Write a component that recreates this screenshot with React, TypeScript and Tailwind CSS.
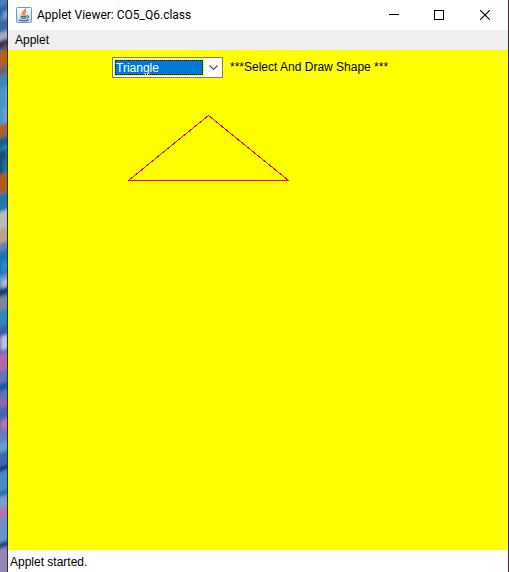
import { useState } from "react";

const shapes = ["Triangle", "Line", "Rectangle", "Oval", "Circle"];

const wallpaper: [number, number, number, number, string][] = [
  [0, 0, 7, 14, "#4a7fc0"],
  [0, 6, 4, 9, "#2f62a8"],
  [3, 12, 4, 12, "#6fa0d0"],
  [0, 20, 7, 12, "#3a68a8"],
  [0, 32, 7, 9, "#a9a9c4"],
  [0, 40, 5, 8, "#28335c"],
  [3, 45, 4, 7, "#7b4a4a"],
  [0, 51, 7, 24, "#b5611f"],
  [0, 66, 3, 10, "#6d6270"],
  [0, 75, 7, 16, "#3b86b8"],
  [2, 88, 5, 22, "#8fb4d2"],
  [0, 88, 3, 36, "#4c93c4"],
  [3, 108, 4, 17, "#6aa0cc"],
  [0, 124, 7, 13, "#a8632c"],
  [0, 137, 7, 12, "#1e5f8c"],
  [2, 147, 5, 12, "#2d8fc4"],
  [0, 150, 3, 24, "#17506f"],
  [3, 160, 4, 14, "#266f94"],
  [0, 174, 7, 19, "#b05c1a"],
  [0, 193, 7, 18, "#2277a8"],
  [0, 211, 7, 18, "#b9bcbd"],
  [0, 228, 7, 15, "#b8a48f"],
  [0, 243, 7, 8, "#5f7fb0"],
  [0, 251, 7, 24, "#1f73b0"],
  [2, 262, 5, 10, "#2b8bcb"],
  [0, 275, 7, 12, "#5b97c2"],
  [2, 280, 5, 10, "#b9b9cf"],
  [0, 288, 7, 8, "#173f73"],
  [0, 296, 7, 14, "#7c8798"],
  [0, 310, 7, 16, "#3087b6"],
  [0, 326, 7, 10, "#3a5fa5"],
  [0, 336, 7, 8, "#8a55b0"],
  [0, 342, 7, 12, "#5362b3"],
  [1, 336, 4, 14, "#b9c3da"],
  [0, 353, 7, 18, "#b06ba7"],
  [0, 370, 7, 13, "#6a6fb5"],
  [0, 383, 7, 8, "#1f57a4"],
  [0, 391, 7, 14, "#6671b4"],
  [1, 400, 5, 7, "#a05fa8"],
  [0, 407, 7, 12, "#4b63ad"],
  [1, 420, 6, 10, "#c070ae"],
  [0, 430, 7, 12, "#6a7abf"],
  [0, 442, 7, 10, "#669fcd"],
  [0, 452, 7, 14, "#3d68b0"],
  [0, 466, 7, 5, "#152f74"],
  [0, 471, 7, 20, "#4a8cc0"],
  [0, 491, 7, 5, "#246ea4"],
  [0, 496, 7, 12, "#78a0c8"],
  [0, 508, 7, 10, "#b673a5"],
  [0, 518, 7, 24, "#6b93c4"],
  [0, 542, 7, 6, "#1b3f88"],
  [0, 548, 7, 30, "#9487b8"],
];

function DesktopEdge() {
  return (
    <div className="w-2 shrink-0 border-r border-[#27303c] bg-[#4579b0]">
      <svg
        viewBox="0 0 7 572"
        preserveAspectRatio="none"
        className="block h-full w-full"
        aria-hidden="true"
      >
        <defs>
          <filter id="soften" x="-1" y="0" width="3" height="1">
            <feGaussianBlur stdDeviation="1.5" />
          </filter>
        </defs>
        <g filter="url(#soften)">
          {wallpaper.map(([x, y, w, h, fill]) => (
            <rect
              key={`${x}-${y}`}
              x={x === 0 ? -4 : x}
              y={y + 1}
              width={x === 0 ? w + 8 : w + 4}
              height={h}
              fill={fill}
              transform="skewY(-20)"
            />
          ))}
        </g>
      </svg>
    </div>
  );
}

function JavaIcon() {
  return (
    <svg viewBox="0 0 16 16" className="size-4 shrink-0" aria-hidden="true">
      <defs>
        <linearGradient id="tile" x1="0" y1="0" x2="0" y2="1">
          <stop offset="0" stopColor="#ffffff" />
          <stop offset="1" stopColor="#c3d3df" />
        </linearGradient>
      </defs>
      <rect x=".5" y=".5" width="15" height="15" rx="1" fill="url(#tile)" stroke="#7896ac" />
      <g fill="none" strokeLinecap="round">
        <path d="M9.4 2.2c.6 1.6-3.2 2.2-2.9 4 .1.8.9 1.1 1 1.7" stroke="#e8722b" strokeWidth="1.5" />
        <path d="M10.3 4.8c-1.6.6-1.9 1.1-1.5 1.8.3.5.3.9-.1 1.3" stroke="#e8722b" strokeWidth="1.1" />
        <path d="M4.9 9.1c1.6.6 4 .6 5.4 0M5.4 10.9c1.4.5 3.2.5 4.6 0M3.4 12.9c2.4.9 6.8.9 9 0" stroke="#44708f" strokeWidth="1.2" />
        <path d="M11.2 8.8c1.8-.3 1.9 1.5.1 2.1" stroke="#44708f" strokeWidth="1.1" />
      </g>
    </svg>
  );
}

function TitleBar() {
  return (
    <header className="flex h-[30px] shrink-0 items-center bg-white pl-2">
      <JavaIcon />
      <h1 className="ml-[5px] min-w-0 flex-1 truncate font-[Roboto,'Open_Sans',sans-serif] text-xs text-black">
        Applet Viewer: CO5_Q6.class
      </h1>
      <div className="flex h-full">
        <button type="button" aria-label="Minimize" className="flex w-[45px] items-center justify-center">
          <svg viewBox="0 0 10 10" className="size-[10px]" shapeRendering="crispEdges">
            <path d="M0 4.5h10" stroke="#000" />
          </svg>
        </button>
        <button type="button" aria-label="Maximize" className="flex w-[45px] items-center justify-center">
          <svg viewBox="0 0 10 10" className="size-[10px]" shapeRendering="crispEdges">
            <path d="M.5 .5h9v9h-9z" fill="none" stroke="#000" />
          </svg>
        </button>
        <button type="button" aria-label="Close" className="flex w-[47px] items-center justify-center">
          <svg viewBox="0 0 10 10" className="size-[10px]">
            <path d="M0 0l10 10M10 0L0 10" stroke="#000" strokeWidth="1.1" />
          </svg>
        </button>
      </div>
    </header>
  );
}

export default function App() {
  const [shape, setShape] = useState("Triangle");

  return (
    <div className="flex min-h-screen font-['Liberation_Sans',Arial,sans-serif] text-xs text-black">
      <DesktopEdge />
      <div className="flex min-w-0 flex-1 flex-col border-r border-[#45202f]">
        <TitleBar />
        <nav className="flex h-5 shrink-0 items-center bg-[#efefef] px-[7px]">
          <button type="button">Applet</button>
        </nav>
        <main className="flex-1 bg-[#ffff00] pt-[7px]">
          <div className="flex justify-center gap-[5px]">
            <div className="relative h-[21px] w-[111px] border border-[#7a7a7a] bg-white p-px">
              <div className="h-full w-[90px] bg-[#ffff00] p-px">
                <select
                  id="shape"
                  value={shape}
                  onChange={(event) => setShape(event.target.value)}
                  className="block h-full w-full appearance-none bg-[#0078d7] pt-px pl-px text-xs leading-[15px] text-white outline-1 -outline-offset-1 outline-dotted outline-[#101010]"
                >
                  {shapes.map((name) => (
                    <option key={name}>{name}</option>
                  ))}
                </select>
              </div>
              <svg
                viewBox="0 0 9 5"
                className="pointer-events-none absolute top-[7px] right-1 h-[5px] w-[9px]"
                aria-hidden="true"
              >
                <path d="M.5 .5l4 4 4-4" fill="none" stroke="#505050" strokeWidth="1.1" />
              </svg>
            </div>
            <label htmlFor="shape" className="w-[176px] px-0.5 leading-5 whitespace-nowrap">
              ***Select And Draw Shape ***
            </label>
          </div>
          <svg
            viewBox="0 0 161 66"
            className="mt-[37px] ml-[120px] h-[66px] w-[161px]"
            shapeRendering="crispEdges"
            role="img"
            aria-label="Triangle"
          >
            <path d="M.5 65.5L80.5 .5l80 65z" fill="none" stroke="#ff0000" />
          </svg>
        </main>
        <footer className="h-[22px] shrink-0 bg-white px-0.5 leading-6">Applet started.</footer>
      </div>
    </div>
  );
}
